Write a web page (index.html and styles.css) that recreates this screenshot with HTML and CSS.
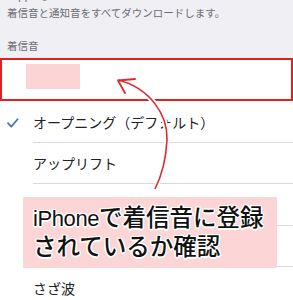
FILE: index.html
```html
<!DOCTYPE html>
<html lang="ja">
<head>
<meta charset="utf-8">
<link rel="stylesheet" href="styles.css">
</head>
<body>
<div class="page">
  <div class="header">
    <div class="footnote">
      <div class="cut">“apple@icloud.com”を使用して購入した</div>
      <div class="desc">着信音と通知音をすべてダウンロードします。</div>
    </div>
    <div class="label">着信音</div>
  </div>
  <div class="list">
    <div class="row boxed"><span class="blank"></span></div>
    <div class="row">
      <svg class="check" width="12" height="10" viewBox="0 0 12 10"><path d="M1 5.2 L4.3 8.6 L10.6 1.2" fill="none" stroke="#3b74c2" stroke-width="1.7" stroke-linecap="round" stroke-linejoin="round"/></svg>
      <span class="name">オープニング（デフォルト）</span>
    </div>
    <div class="row"><span class="name">アップリフト</span></div>
    <div class="row"><span class="name">イルミネート</span></div>
    <div class="row"><span class="name">キラキラ</span></div>
    <div class="row last"><span class="name">さざ波</span></div>
  </div>
  <svg class="arrow" width="293" height="300" viewBox="0 0 293 300">
    <path d="M118 80 C150 88 168 115 167 140 C166 160 162 175 155 189" fill="none" stroke="#ffffff" stroke-width="5"/>
    <path d="M118 80 C150 88 168 115 167 140 C166 160 162 175 155 189" fill="none" stroke="#dc2a30" stroke-width="1.6"/>
    <path d="M135 79 L118 80.5 L125 93" fill="none" stroke="#dc2a30" stroke-width="1.8" stroke-linecap="round" stroke-linejoin="round"/>
  </svg>
  <div class="callout"><span class="latin">iPhone</span>で着信音に登録<br>されているか確認</div>
</div>
</body>
</html>
```
FILE: styles.css
```css
html, body {
  margin: 0;
  padding: 0;
  background: #ffffff;
  overflow: hidden;
}
.page {
  position: relative;
  width: 293px;
  height: 300px;
  overflow: hidden;
  font-family: "Noto Sans CJK JP", "Noto Sans", sans-serif;
}
.header {
  background: #efeff4;
  height: 58px;
  padding: 0 7px;
  box-sizing: border-box;
  overflow: hidden;
}
.footnote {
  font-size: 10.5px;
  line-height: 15.5px;
  color: #6d6d72;
  white-space: nowrap;
}
.cut {
  margin-top: -13.5px;
  margin-bottom: 2.5px;
}
.label {
  margin-top: 18px;
  font-size: 10.5px;
  line-height: 15px;
  color: #6d6d72;
}
.list {
  background: #ffffff;
}
.row {
  height: 41.5px;
  display: flex;
  align-items: center;
  position: relative;
  box-sizing: border-box;
}
.row .name {
  flex: 1;
  height: 100%;
  display: flex;
  align-items: center;
  margin-left: 33px;
  border-bottom: 1px solid #d9d9dd;
  box-sizing: border-box;
  font-size: 14px;
  color: #222222;
  padding-top: 1px;
}
.row.last .name {
  border-bottom: none;
}
.check {
  position: absolute;
  left: 7px;
  top: 17px;
}
.row.boxed {
  height: 43px;
  border: 2.5px solid #e2201f;
  align-items: flex-start;
  padding: 3.5px 0 0 23.5px;
}
.blank {
  width: 54px;
  height: 25px;
  background: #fdd4d5;
}
.arrow {
  position: absolute;
  left: 0;
  top: 0;
}
.callout {
  position: absolute;
  left: 23px;
  top: 197px;
  width: 254px;
  height: 71px;
  box-sizing: border-box;
  padding: 6px 0 0 10px;
  background: #fcd5d6;
  font-size: 23.5px;
  line-height: 27px;
  font-weight: 500;
  color: #111111;
  white-space: nowrap;
  text-shadow: 1.5px 0 0 #fff, -1.5px 0 0 #fff, 0 1.5px 0 #fff, 0 -1.5px 0 #fff, 1px 1px 0 #fff, -1px -1px 0 #fff, 1px -1px 0 #fff, -1px 1px 0 #fff;
}
.callout .latin {
  font-family: "Liberation Sans", "Noto Sans", sans-serif;
  font-size: 22px;
  letter-spacing: -0.4px;
}
```
